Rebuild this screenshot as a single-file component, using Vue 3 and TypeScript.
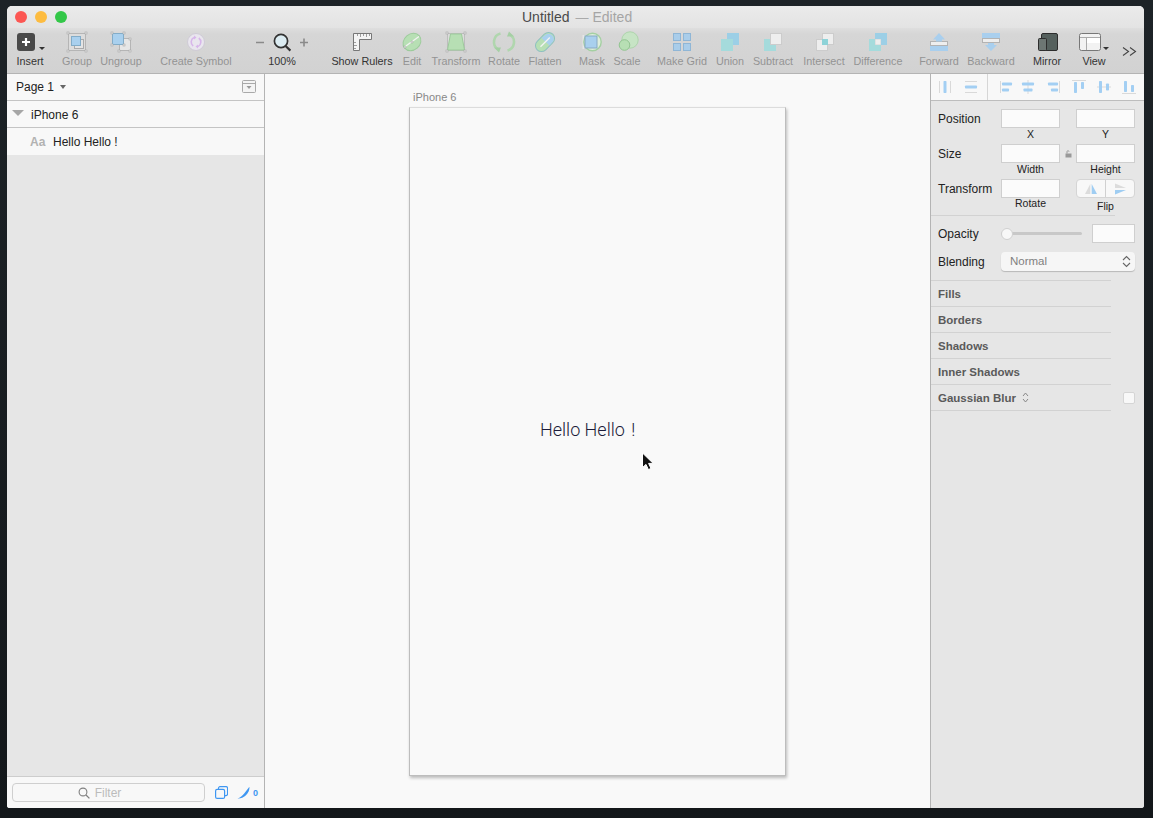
<template>
    <div class="desk">
        <div class="window">
            <header class="titlebar">
                <div class="lights">
                    <span class="light light--red"></span>
                    <span class="light light--yellow"></span>
                    <span class="light light--green"></span>
                </div>
                <div class="title">Untitled<span class="title__dash">—</span><span class="title__state">Edited</span></div>
            </header>

            <div class="toolbar">
                <div
                    v-for="tool in placedTools"
                    :key="tool.id"
                    class="tool"
                    :class="{ 'tool--off': tool.off }"
                    :style="{ width: tool.w + 'px', marginLeft: tool.gap + 'px' }"
                >
                    <svg class="tool__icon" :width="tool.w" height="24" :viewBox="`0 0 ${tool.w} 24`" v-html="tool.icon"></svg>
                    <span class="tool__label">{{ tool.label }}</span>
                </div>
            </div>

            <div class="main">
                <aside class="layers">
                    <div class="layers__row layers__row--page">
                        <span>Page 1</span>
                        <span class="caret"></span>
                        <svg class="layers__toggle" width="14" height="13" viewBox="0 0 14 13">
                            <rect x="0.5" y="0.5" width="13" height="12" rx="1" fill="#f4f4f4" stroke="#a9a9a9" />
                            <path d="M0.5 3.5H13.5" stroke="#a9a9a9" />
                            <path d="M4.5 6H9.5L7 9Z" fill="#999" />
                        </svg>
                    </div>
                    <div class="layers__row layers__row--group">
                        <span class="disclosure"></span>
                        <span>iPhone 6</span>
                    </div>
                    <div class="layers__row layers__row--text">
                        <span class="layers__aa">Aa</span>
                        <span>Hello Hello !</span>
                    </div>
                    <div class="layers__rest"></div>
                    <div class="layers__foot">
                        <div class="filter">
                            <svg width="12" height="12" viewBox="0 0 12 12">
                                <circle cx="5" cy="5" r="3.9" fill="none" stroke="#808080" stroke-width="1.1" />
                                <path d="M8 8L11.4 11.4" stroke="#808080" stroke-width="1.3" />
                            </svg>
                            <span>Filter</span>
                        </div>
                        <svg class="foot-icon" width="13" height="13" viewBox="0 0 13 13">
                            <rect x="3.5" y="0.6" width="9" height="9" rx="1.5" fill="none" stroke="#3f97f2" stroke-width="1.1" />
                            <rect x="0.6" y="3.4" width="9" height="9" rx="1.5" fill="#f8f8f8" stroke="#3f97f2" stroke-width="1.2" />
                        </svg>
                        <svg class="foot-icon foot-icon--pen" width="13" height="13" viewBox="0 0 13 13">
                            <path d="M0.5 12.5C3 11.8 5.6 9.7 7.2 7.6L12.4 0.7C12.9 3.4 11.2 7.4 8.4 9.8C6.4 11.6 3.4 12.8 0.5 12.5Z" fill="#3f97f2" />
                        </svg>
                        <span class="foot-count">0</span>
                    </div>
                </aside>

                <section class="canvas">
                    <div class="artboard-name">iPhone 6</div>
                    <div class="artboard">
                        <span class="artboard__text">Hello Hello <span class="artboard__bang">!</span></span>
                    </div>
                    <svg class="cursor" width="14" height="20" viewBox="0 0 14 20">
                        <path d="M1.5 1V15.5L5 12.4L7.4 17.6L10 16.4L7.6 11.4H12.2Z" fill="#111" stroke="#fff" stroke-width="1" />
                    </svg>
                </section>

                <aside class="inspector">
                    <div class="aligns">
                        <template v-for="item in placedAligns" :key="item.id">
                            <span v-if="item.divider" class="aligns__divider" :style="{ marginLeft: item.gap + 'px' }"></span>
                            <svg v-else width="16" height="16" viewBox="0 0 16 16" :style="{ marginLeft: item.gap + 'px' }" v-html="item.icon"></svg>
                        </template>
                    </div>

                    <div class="geometry">
                        <div class="label">Position</div>
                        <div class="field"><span class="box"></span><span class="caption">X</span></div>
                        <div></div>
                        <div class="field"><span class="box"></span><span class="caption">Y</span></div>

                        <div class="label">Size</div>
                        <div class="field"><span class="box"></span><span class="caption">Width</span></div>
                        <div class="lock">
                            <svg width="7" height="8" viewBox="0 0 7 8">
                                <path d="M2 3.5V1.6C2 0.4 4 0.4 4 1.6" fill="none" stroke="#999" />
                                <rect x="0.5" y="3.5" width="6" height="4" fill="#999" />
                            </svg>
                        </div>
                        <div class="field"><span class="box"></span><span class="caption">Height</span></div>

                        <div class="label">Transform</div>
                        <div class="field"><span class="box"></span><span class="caption caption--high">Rotate</span></div>
                        <div></div>
                        <div class="field">
                            <span class="flip">
                                <svg width="14" height="12" viewBox="0 0 14 12">
                                    <path d="M6.3 1V11H1Z" fill="#dcdcdc" />
                                    <path d="M7.7 1V11H13Z" fill="#9fcdf2" />
                                </svg>
                                <svg width="14" height="12" viewBox="0 0 14 12">
                                    <path d="M2 0.5L13 5H2Z" fill="#dcdcdc" />
                                    <path d="M2 7L13 7L2 11.5Z" fill="#9fcdf2" />
                                </svg>
                            </span>
                            <span class="caption caption--low">Flip</span>
                        </div>
                    </div>

                    <div class="style-block">
                        <div class="style-row">
                            <div class="label">Opacity</div>
                            <div class="slider"><span class="slider__thumb"></span></div>
                            <span class="box box--small"></span>
                        </div>
                        <div class="style-row">
                            <div class="label">Blending</div>
                            <div class="select">
                                <span>Normal</span>
                                <svg width="9" height="13" viewBox="0 0 9 13">
                                    <path d="M1 5L4.5 1.5L8 5M1 8L4.5 11.5L8 8" fill="none" stroke="#666" stroke-width="1.1" />
                                </svg>
                            </div>
                        </div>
                    </div>

                    <div v-for="section in sections" :key="section" class="section">
                        <span>{{ section }}</span>
                        <template v-if="section === 'Gaussian Blur'">
                            <svg class="section__arrows" width="7" height="11" viewBox="0 0 7 11">
                                <path d="M1 4L3.5 1L6 4M1 7L3.5 10L6 7" fill="none" stroke="#888" />
                            </svg>
                            <span class="section__check"></span>
                        </template>
                    </div>
                </aside>
            </div>
        </div>
    </div>
</template>

<script setup lang="ts">
import { computed } from 'vue';

type Tool = { id: string; label: string; cx: number; w: number; off?: boolean; icon: string };

const handles = (points: number[][]) =>
    points.map(([x, y]) => `<rect x="${x - 1}" y="${y - 1}" width="2" height="2" fill="#e8e8e8" stroke="#a8a8a8" stroke-width=".6"/>`).join('');

const tools: Tool[] = [
    {
        id: 'insert', label: 'Insert', cx: 30, w: 36,
        icon: '<rect x="5" y="3" width="18" height="18" rx="3" fill="#4a4a4a"/><path d="M14 8V16M10 12H18" stroke="#fff" stroke-width="2.2"/><path d="M27 17H33L30 20Z" fill="#333"/>',
    },
    {
        id: 'group', label: 'Group', cx: 77, w: 32, off: true,
        icon: `<rect x="7.5" y="3.5" width="17" height="17" fill="#dcdcdc" stroke="#b5b5b5"/><rect x="13.5" y="9.5" width="9" height="9" fill="#e4e4e4" stroke="#aaa"/><rect x="10.5" y="6.5" width="9" height="9" fill="#a9d0ee" stroke="#82acc8"/>${handles([[7, 3], [25, 3], [7, 21], [25, 21]])}`,
    },
    {
        id: 'ungroup', label: 'Ungroup', cx: 121, w: 44, off: true,
        icon: `<rect x="20.5" y="8.5" width="11" height="12" fill="#e6e6e6" stroke="#b5b5b5"/><rect x="13.5" y="3.5" width="11" height="11" fill="#a9d0ee" stroke="#82acc8"/>${handles([[13, 3], [25, 3], [13, 15], [25, 15], [31, 9], [20, 21], [31, 21]])}`,
    },
    {
        id: 'symbol', label: 'Create Symbol', cx: 196, w: 74, off: true,
        icon: '<circle cx="37" cy="12" r="8.5" fill="#e9e6ee" stroke="#cfcbd6"/><path d="M34.2 16A5 5 0 0 1 35 7.5M39.8 8A5 5 0 0 1 39 16.5" fill="none" stroke="#d7b6ea" stroke-width="1.6"/><path d="M35 5.5L37.5 7.6L35 9.6ZM39 14.5L36.5 16.4L39 18.5Z" fill="#d7b6ea"/>',
    },
    {
        id: 'zoom', label: '100%', cx: 282, w: 60,
        icon: '<path d="M4 12.5H12M48 12.5H56M52 8.5V16.5" stroke="#8a8a8a" stroke-width="1.6"/><circle cx="29" cy="11" r="6.6" fill="#dcecf2" stroke="#333" stroke-width="1.7"/><path d="M33.6 16L38.4 20.6" stroke="#333" stroke-width="2.2"/>',
    },
    {
        id: 'rulers', label: 'Show Rulers', cx: 362, w: 64,
        icon: '<path d="M23.5 3.5H41.5V9.5H29.5V20.5H23.5Z" fill="#f4f4f4" stroke="#777"/><path d="M27.5 4V6M30.5 4V7M33.5 4V6M36.5 4V7M39.5 4V6M24 12.5H26M24 15.5H27M24 18.5H26" stroke="#888" stroke-width=".8"/>',
    },
    {
        id: 'edit', label: 'Edit', cx: 412, w: 30, off: true,
        icon: '<ellipse cx="15" cy="12" rx="9.6" ry="8" transform="rotate(-40 15 12)" fill="#b7dfb4" stroke="#9ccb9b"/><path d="M7.5 17L22 6.5" stroke="#f2f2f2" stroke-width="1.3"/><circle cx="8" cy="17" r="1.1" fill="#eee" stroke="#999" stroke-width=".5"/><circle cx="15" cy="12" r="1.1" fill="#eee" stroke="#999" stroke-width=".5"/>',
    },
    {
        id: 'transform', label: 'Transform', cx: 456, w: 50, off: true,
        icon: `<rect x="16.5" y="3.5" width="17" height="17" fill="#dcdcdc" stroke="#bdbdbd"/><path d="M19.5 4H30.5L33.5 20H16.5Z" fill="#b7dfb4" stroke="#9ccb9b"/>${handles([[16, 3], [34, 3], [16, 21], [34, 21]])}`,
    },
    {
        id: 'rotate', label: 'Rotate', cx: 504, w: 36, off: true,
        icon: '<path d="M14.5 3.5C7 5.5 6 15 11.5 19" fill="none" stroke="#b0d6ae" stroke-width="2.6"/><path d="M21.5 20.5C29 18.5 30 9 24.5 5" fill="none" stroke="#b0d6ae" stroke-width="2.6"/><path d="M8 17.5L15 17.5L13 22.5ZM28 6.5L21 6.5L23 1.5Z" fill="#a5cfa4"/>',
    },
    {
        id: 'flatten', label: 'Flatten', cx: 545, w: 38, off: true,
        icon: '<rect x="8" y="6" width="22" height="12" rx="6" transform="rotate(-45 19 12)" fill="#b7dfb4" stroke="#8fc0c0"/><path d="M20 4.5C24 1.6 30 7.2 27 11.5L23.5 15.5L15.5 8Z" fill="#a9d0ee"/><path d="M14.5 16.8L23.8 7.5" stroke="#f3f3f3" stroke-width="1.3"/>',
    },
    {
        id: 'mask', label: 'Mask', cx: 592, w: 30, off: true,
        icon: '<rect x="5.5" y="5" width="15" height="14" fill="#e6e6e6"/><circle cx="15.5" cy="12" r="8.7" fill="#dfeedd" stroke="#a4d0a2" stroke-width="1.4"/><rect x="8" y="6" width="12" height="12" fill="#a9d0ee" stroke="#88a9c2"/>',
    },
    {
        id: 'scale', label: 'Scale', cx: 627, w: 30, off: true,
        icon: '<circle cx="18" cy="10" r="8.2" fill="#c7e4c5" stroke="#aed5ac"/><circle cx="12.5" cy="15" r="5.3" fill="#b7dfb4" stroke="#92c591"/>',
    },
    {
        id: 'grid', label: 'Make Grid', cx: 682, w: 52, off: true,
        icon: '<g fill="#a9cdea" stroke="#8fb6d6"><rect x="17.5" y="3.5" width="7" height="7"/><rect x="27.5" y="3.5" width="7" height="7"/><rect x="17.5" y="13.5" width="7" height="7"/><rect x="27.5" y="13.5" width="7" height="7"/></g>',
    },
    {
        id: 'union', label: 'Union', cx: 730, w: 32, off: true,
        icon: '<path d="M13 3H25V15H19V21H7V9H13Z" fill="#a5dbdc"/><rect x="13" y="3" width="12" height="12" fill="#9ccfe6"/><rect x="13" y="9" width="6" height="6" fill="#a5dbdc"/>',
    },
    {
        id: 'subtract', label: 'Subtract', cx: 773, w: 44, off: true,
        icon: '<path d="M13 9V15H19V21H7V9Z" transform="translate(6 0)" fill="#a5dbdc"/><rect x="19.5" y="3.5" width="11" height="11" fill="#eee" stroke="#ccc"/>',
    },
    {
        id: 'intersect', label: 'Intersect', cx: 824, w: 46, off: true,
        icon: '<rect x="21.5" y="3.5" width="11" height="11" fill="#eee" stroke="#ccc"/><rect x="15.5" y="9.5" width="11" height="11" fill="#eee" stroke="#ccc"/><rect x="21" y="9" width="6" height="6" fill="#8ed3d8"/>',
    },
    {
        id: 'difference', label: 'Difference', cx: 878, w: 50, off: true,
        icon: '<path d="M22 3H34V15H28V9H22Z" fill="#9ccfe6"/><path d="M16 9H22V15H28V21H16Z" fill="#a5dbdc"/><rect x="22.5" y="9.5" width="5" height="5" fill="#eee"/>',
    },
    {
        id: 'forward', label: 'Forward', cx: 939, w: 40, off: true,
        icon: '<rect x="11.5" y="11.5" width="17" height="4" fill="#eee" stroke="#b3b3b3"/><path d="M20 3L26 9.5H23V11.5H17V9.5H14Z" fill="#a9cfee"/><rect x="11" y="16" width="18" height="5" fill="#a9cfee"/>',
    },
    {
        id: 'backward', label: 'Backward', cx: 991, w: 48, off: true,
        icon: '<rect x="15" y="3" width="18" height="5" fill="#a9cfee"/><rect x="15.5" y="8.5" width="17" height="4" fill="#eee" stroke="#b3b3b3"/><path d="M24 21L18 15H21V13H27V15H30Z" fill="#a9cfee"/>',
    },
    {
        id: 'mirror', label: 'Mirror', cx: 1047, w: 36, off: false,
        icon: '<rect x="12.5" y="3.5" width="16" height="17" rx="1.5" fill="#55605d" stroke="#2d2d2d"/><rect x="9.5" y="8.5" width="8" height="12" rx="1" fill="#6d7673" stroke="#2d2d2d"/>',
    },
    {
        id: 'view', label: 'View', cx: 1094, w: 34, off: false,
        icon: '<rect x="2.5" y="3.5" width="21" height="17" rx="2" fill="#f2f2f2" stroke="#777"/><path d="M3 7.5H23M9.5 8V20" stroke="#aaa"/><rect x="10" y="8" width="13" height="5" fill="#fff"/><path d="M26 17H32L29 20Z" fill="#333"/>',
    },
    {
        id: 'more', label: '', cx: 1129, w: 16, off: false,
        icon: '<path d="M2 17.5L7.5 21.5L2 25.5M9 17.5L14.5 21.5L9 25.5" fill="none" stroke="#444" stroke-width="1.1"/>',
    },
];

const placedTools = computed(() => {
    let right = 7;
    return tools.map((tool) => {
        const left = tool.cx - tool.w / 2;
        const gap = left - right;
        right = left + tool.w;
        return { ...tool, gap };
    });
});

const bar = (x: number, y: number, w: number, h: number) =>
    `<rect x="${x}" y="${y}" width="${w}" height="${h}" rx=".8" fill="#a3cff3"/>`;
const rule = (x: number, y: number, w: number, h: number) =>
    `<rect x="${x}" y="${y}" width="${w}" height="${h}" fill="#d9d9d9"/>`;

const aligns = [
    { id: 'dist-v', cx: 944.5, icon: rule(2, 2, 1, 12) + rule(13, 2, 1, 12) + bar(6.5, 2, 3, 12) },
    { id: 'dist-h', cx: 970.5, icon: rule(2, 2, 12, 1) + rule(2, 13, 12, 1) + bar(2, 6.5, 12, 3) },
    { id: 'divider', cx: 987.5, divider: true, icon: '' },
    { id: 'left', cx: 1006, icon: rule(2, 2, 1, 12) + bar(4, 3.5, 10, 3) + bar(4, 9.5, 7, 3) },
    { id: 'center', cx: 1028, icon: rule(7.5, 1, 1, 14) + bar(2, 3.5, 12, 3) + bar(3.5, 9.5, 9, 3) },
    { id: 'right', cx: 1054, icon: rule(13, 2, 1, 12) + bar(2, 3.5, 10, 3) + bar(5, 9.5, 7, 3) },
    { id: 'top', cx: 1079, icon: rule(1, 1, 14, 1) + bar(3, 3, 3, 11) + bar(10, 3, 3, 7) },
    { id: 'middle', cx: 1104, icon: rule(1, 7.5, 14, 1) + bar(3, 2, 3, 12) + bar(10, 4.5, 3, 7) },
    { id: 'bottom', cx: 1129, icon: rule(1, 14, 14, 1) + bar(3, 2, 3, 11) + bar(10, 6, 3, 7) },
];

const placedAligns = computed(() => {
    let right = 931;
    return aligns.map((item) => {
        const w = item.divider ? 1 : 16;
        const left = item.cx - w / 2;
        const gap = left - right;
        right = left + w;
        return { ...item, gap };
    });
});

const sections = ['Fills', 'Borders', 'Shadows', 'Inner Shadows', 'Gaussian Blur'];
</script>

<style>
html,
body {
    margin: 0;
    background: #161a1d;
}
</style>

<style scoped>
.desk {
    box-sizing: border-box;
    width: 1153px;
    height: 818px;
    padding: 6px 9px 10px 7px;
    background: linear-gradient(#1d2327, #13171a);
    font-family: "Liberation Sans", Arial, sans-serif;
    font-size: 12px;
    color: #222;
}

.window {
    display: flex;
    flex-direction: column;
    height: 100%;
    border-radius: 5px 5px 3px 3px;
    overflow: hidden;
    background: #f9f9f9;
}

.titlebar {
    position: relative;
    display: flex;
    flex: none;
    align-items: center;
    height: 22px;
    background: linear-gradient(#ebebeb, #e3e3e3);
}

.lights {
    display: flex;
    gap: 8px;
    padding-left: 8px;
}

.light {
    width: 12px;
    height: 12px;
    border-radius: 50%;
}

.light--red { background: #fc5753; }
.light--yellow { background: #fdbc40; }
.light--green { background: #33c748; }

.title {
    position: absolute;
    top: 3px;
    left: 515px;
    font-size: 14px;
    line-height: 17px;
    color: #4a4a4a;
}

.title__dash {
    margin: 0 4px 0 6px;
    color: #aaa;
    font-size: 13px;
}

.title__state {
    color: #a5a5a5;
}

.toolbar {
    display: flex;
    flex: none;
    box-sizing: border-box;
    height: 46px;
    padding-top: 2px;
    border-bottom: 1px solid #b4b4b4;
    background: linear-gradient(#dedede 0, #d6d6d6 6px, #d2d2d2 100%);
}

.tool {
    display: flex;
    flex: none;
    flex-direction: column;
    align-items: center;
}

.tool__icon {
    display: block;
    flex: none;
    overflow: visible;
}

.tool__label {
    margin-top: 1px;
    font-size: 10.8px;
    line-height: 13px;
    white-space: nowrap;
    color: #333;
}

.tool--off .tool__label {
    color: #939393;
}

.main {
    display: flex;
    flex: 1;
    min-height: 0;
}

.layers {
    display: flex;
    flex: none;
    flex-direction: column;
    box-sizing: border-box;
    width: 258px;
    border-right: 1px solid #b4b4b4;
    background: #e6e6e6;
}

.layers__row {
    display: flex;
    flex: none;
    align-items: center;
    box-sizing: border-box;
    height: 27px;
    border-bottom: 1px solid #c4c4c4;
    background: #f8f8f8;
    color: #222;
}

.layers__row--page {
    padding: 0 8px 1px 9px;
}

.caret {
    width: 0;
    height: 0;
    margin: 1px 0 0 6px;
    border: 3px solid transparent;
    border-top: 4px solid #666;
    border-bottom: 0;
}

.layers__toggle {
    margin-left: auto;
}

.layers__row--group {
    padding: 1px 0 0 5px;
}

.disclosure {
    width: 0;
    height: 0;
    margin: -3px 7px 0 0;
    border: 6px solid transparent;
    border-top: 6px solid #a6a6a6;
    border-bottom: 0;
}

.layers__row--text {
    height: 27px;
    padding: 1px 0 0 23px;
    border-bottom: 0;
}

.layers__aa {
    width: 23px;
    font-weight: 700;
    color: #b2b2b2;
}

.layers__rest {
    flex: 1;
}

.layers__foot {
    display: flex;
    flex: none;
    align-items: center;
    box-sizing: border-box;
    height: 32px;
    padding: 0 0 0 5px;
    border-top: 1px solid #cdcdcd;
    background: #f8f8f8;
}

.filter {
    display: flex;
    align-items: center;
    justify-content: center;
    gap: 5px;
    box-sizing: border-box;
    width: 193px;
    height: 19px;
    padding-right: 18px;
    border: 1px solid #cfcfcf;
    border-radius: 4px;
    font-size: 12px;
    color: #bcbcbc;
}

.foot-icon {
    margin-left: 10px;
}

.foot-icon--pen {
    margin-left: 9px;
}

.foot-count {
    margin-left: 3px;
    font-size: 9px;
    font-weight: 700;
    color: #3f97f2;
}

.canvas {
    position: relative;
    flex: 1;
    padding: 16px 0 0 144px;
    background: #f9f9f9;
}

.artboard-name {
    padding-left: 4px;
    font-size: 11px;
    line-height: 14px;
    color: #888;
}

.artboard {
    position: relative;
    box-sizing: border-box;
    width: 377px;
    height: 669px;
    margin-top: 3px;
    border: 1px solid #bdbdbd;
    border-top-color: #dcdcdc;
    background: #f9f9f9;
    box-shadow: 1px 2px 3px rgba(0, 0, 0, 0.25);
}

.artboard__text {
    position: absolute;
    top: 311px;
    left: 130px;
    font-family: Roboto, "Liberation Sans", sans-serif;
    font-size: 18px;
    font-weight: 300;
    line-height: 22px;
    white-space: nowrap;
    color: #1c1c3a;
}

.artboard__bang {
    margin-left: 2px;
}

.cursor {
    position: absolute;
    top: 378px;
    left: 376px;
}

.inspector {
    flex: none;
    box-sizing: border-box;
    width: 214px;
    border-left: 1px solid #b4b4b4;
    background: #e6e6e6;
}

.aligns {
    display: flex;
    align-items: center;
    box-sizing: border-box;
    height: 27px;
    border-bottom: 1px solid #bdbdbd;
    background: #f8f8f8;
}

.aligns svg {
    flex: none;
}

.aligns__divider {
    flex: none;
    width: 1px;
    height: 26px;
    background: #d6d6d6;
}

.geometry {
    display: grid;
    grid-template-columns: 63px 59px 16px 59px;
    grid-auto-rows: 35px;
    box-sizing: border-box;
    width: 184px;
    height: 115px;
    padding: 8px 0 1px 7px;
    border-bottom: 1px solid #d2d2d2;
    overflow: visible;
}

.label {
    padding-top: 1px;
    font-size: 12px;
    line-height: 19px;
    color: #222;
}

.field {
    display: flex;
    flex-direction: column;
    align-items: center;
}

.box {
    display: block;
    flex: none;
    box-sizing: border-box;
    width: 59px;
    height: 19px;
    border: 1px solid #cfcfcf;
    background: #fbfbfb;
}

.box--small {
    width: 43px;
}

.caption {
    font-size: 10.5px;
    line-height: 13px;
    color: #222;
}

.caption--high {
    margin-top: -1px;
}

.caption--low {
    padding-top: 2px;
}

.lock {
    display: flex;
    justify-content: center;
    padding-top: 6px;
}

.lock svg {
    display: block;
}

.flip {
    display: flex;
    align-items: center;
    justify-content: space-around;
    box-sizing: border-box;
    width: 59px;
    height: 19px;
    border: 1px solid #d5d5d5;
    border-radius: 4px;
    background: linear-gradient(90deg, #f8f8f8 49%, #d0d0d0 49%, #d0d0d0 51%, #f8f8f8 51%);
}

.style-block {
    display: flex;
    flex-direction: column;
    gap: 9px;
    box-sizing: border-box;
    width: 100%;
    height: 65px;
    padding: 8px 9px 0 7px;
    background: linear-gradient(#d2d2d2, #d2d2d2) no-repeat 0 100% / 180px 1px;
}

.style-row {
    display: flex;
    align-items: center;
    height: 19px;
}

.style-row .label {
    flex: none;
    width: 63px;
}

.slider {
    position: relative;
    flex: none;
    width: 81px;
    height: 3px;
    margin-right: 10px;
    border-radius: 2px;
    background: #c8c8c8;
}

.slider__thumb {
    position: absolute;
    top: -4px;
    left: 0;
    box-sizing: border-box;
    width: 12px;
    height: 12px;
    border: 1px solid #d0d0d0;
    border-radius: 50%;
    background: #f8f8f8;
}

.select {
    display: flex;
    flex: none;
    align-items: center;
    justify-content: space-between;
    box-sizing: border-box;
    width: 134px;
    height: 19px;
    padding: 0 4px 1px 9px;
    border-radius: 4px;
    background: #f6f6f6;
    box-shadow: 0 1px 1px rgba(0, 0, 0, 0.2);
    font-size: 11.5px;
    color: #808080;
}

.section {
    display: flex;
    align-items: center;
    box-sizing: border-box;
    height: 26px;
    padding-left: 7px;
    padding-bottom: 1px;
    font-size: 11.5px;
    font-weight: 700;
    color: #5a5a5a;
    background: linear-gradient(#d2d2d2, #d2d2d2) no-repeat 0 100% / 180px 1px;
}

.section__arrows {
    margin-left: 6px;
}

.section__check {
    box-sizing: border-box;
    width: 12px;
    height: 12px;
    margin-left: auto;
    margin-right: 9px;
    border: 1px solid #d5d5d5;
    border-radius: 2px;
    background: #f8f8f8;
}
</style>
